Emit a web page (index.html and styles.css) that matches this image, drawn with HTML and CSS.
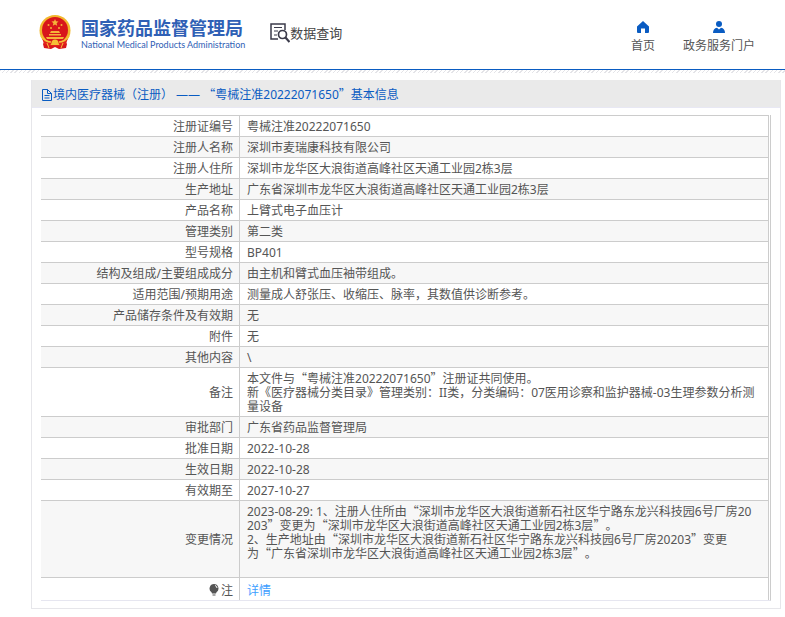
FILE: index.html
```
<!DOCTYPE html>
<html lang="zh-CN">
<head>
<meta charset="utf-8">
<title>数据查询</title>
<link rel="stylesheet" href="styles.css">
</head>
<body>
<header class="top">
  <a class="brand" href="#">
    <svg class="emblem" viewBox="0 0 32 34" aria-hidden="true">
      <path d="M7 24 L25 24 L28 29 L27 33 L20 34 L16 32 L12 34 L5 33 L4 29Z" fill="#d8161b"/>
      <circle cx="16" cy="15.500" r="15.500" fill="#f2b72c"/>
      <circle cx="16" cy="15" r="13" fill="#d8161b"/>
      <path d="M16 4l1 2.300 2.500.2-1.900 1.700.6 2.500-2.200-1.300-2.200 1.300.6-2.500-1.900-1.700 2.500-.2z" fill="#f5b43a"/>
      <g fill="#f5b43a"><circle cx="9.500" cy="10" r="1"/><circle cx="12" cy="13" r="1"/><circle cx="20" cy="13" r="1"/><circle cx="22.500" cy="10" r="1"/>
      <path d="M12 16h8l1 2H11zM10 19h12v1.500H10zM7 22h18l-1 2H8z"/></g>
      <path d="M3 23q13 8 26 0l-2 6q-11 5-22 0z" fill="#e3231c"/>
      <path d="M2 21q4 6 10 6M30 21q-4 6-10 6" stroke="#f5c037" stroke-width="1.500" fill="none"/>
      <path d="M12.500 28a3.500 3.500 0 0 1 7 0l1 2h-9z" fill="#f5c037"/>
      <path d="M8 28l2 5M24 28l-2 5" stroke="#f5c037" fill="none"/>
    </svg>
    <span class="names">
      <strong class="name-zh">国家药品监督管理局</strong>
      <span class="name-en">National Medical Products Administration</span>
    </span>
  </a>
  <a class="section" href="#">
    <svg class="search" viewBox="0 0 20 20" fill="none" stroke="#3b3b4b" aria-hidden="true">
      <path d="M15 7V1H1v15h7" stroke-width="1.500"/>
      <path d="M4 4.500h8M4 8h4M4 12h3"/>
      <circle cx="12.500" cy="11.500" r="4" stroke-width="1.700"/>
      <path d="M15.500 14.500l4 4.500" stroke-width="2.200"/>
    </svg>
    <span>数据查询</span>
  </a>
  <nav class="nav">
    <a href="#">
      <svg viewBox="0 0 12 12" aria-hidden="true"><path d="M6 0L0 5.500V11q0 1 1 1h3V7.500h4V12h3q1 0 1-1V5.500z" fill="#0a5cc2"/></svg>
      <span>首页</span>
    </a>
    <a href="#">
      <svg viewBox="0 0 12 12" aria-hidden="true"><circle cx="6" cy="3" r="3" fill="#0a5cc2"/><path d="M0 12q0-4.500 4-5.200l2 1.700 2-1.700q4 .7 4 5.200z" fill="#0a5cc2"/></svg>
      <span>政务服务门户</span>
    </a>
  </nav>
</header>
<main class="panel">
  <h1 class="title">
    <svg class="doc" viewBox="0 0 12 12" fill="none" stroke="#0a5cc2" aria-hidden="true"><path d="M1.500.5h5l4 4v7h-9zM6.500.5v4h4M3.500 6.500h5M3.500 9h5"/></svg>
    <span>境内医疗器械（注册） —— <span class="cjk">“</span>粤械注准20222071650<span class="cjk">”</span>基本信息</span>
  </h1>
  <div class="frame">
  <table class="info">
    <tbody>
      <tr><th scope="row">注册证编号</th><td>粤械注准20222071650</td></tr>
      <tr><th scope="row">注册人名称</th><td>深圳市麦瑞康科技有限公司</td></tr>
      <tr><th scope="row">注册人住所</th><td>深圳市龙华区大浪街道高峰社区天通工业园2栋3层</td></tr>
      <tr><th scope="row">生产地址</th><td>广东省深圳市龙华区大浪街道高峰社区天通工业园2栋3层</td></tr>
      <tr><th scope="row">产品名称</th><td>上臂式电子血压计</td></tr>
      <tr><th scope="row">管理类别</th><td>第二类</td></tr>
      <tr><th scope="row">型号规格</th><td>BP401</td></tr>
      <tr><th scope="row">结构及组成/主要组成成分</th><td>由主机和臂式血压袖带组成。</td></tr>
      <tr><th scope="row">适用范围/预期用途</th><td>测量成人舒张压、收缩压、脉率，其数值供诊断参考。</td></tr>
      <tr><th scope="row">产品储存条件及有效期</th><td>无</td></tr>
      <tr><th scope="row">附件</th><td>无</td></tr>
      <tr><th scope="row">其他内容</th><td>\</td></tr>
      <tr><th scope="row">备注</th><td>本文件与<span class="cjk">“</span>粤械注准20222071650<span class="cjk">”</span>注册证共同使用。<br>新《医疗器械分类目录》管理类别：II类，分类编码：07医用诊察和监护器械-03生理参数分析测量设备</td></tr>
      <tr><th scope="row">审批部门</th><td>广东省药品监督管理局</td></tr>
      <tr><th scope="row">批准日期</th><td>2022-10-28</td></tr>
      <tr><th scope="row">生效日期</th><td>2022-10-28</td></tr>
      <tr><th scope="row">有效期至</th><td>2027-10-27</td></tr>
      <tr><th scope="row">变更情况</th><td>2023-08-29: 1、注册人住所由<span class="cjk">“</span>深圳市龙华区大浪街道新石社区华宁路东龙兴科技园6号厂房20203<span class="cjk">”</span>变更为<span class="cjk">“</span>深圳市龙华区大浪街道高峰社区天通工业园2栋3层<span class="cjk">”</span>。<br>2、生产地址由<span class="cjk">“</span>深圳市龙华区大浪街道新石社区华宁路东龙兴科技园6号厂房20203<span class="cjk">”</span>变更<br>为<span class="cjk">“</span>广东省深圳市龙华区大浪街道高峰社区天通工业园2栋3层<span class="cjk">”</span>。<br><br></td></tr>
      <tr class="note"><th scope="row"><svg class="bulb" viewBox="0 0 10 12" aria-hidden="true"><path d="M5 0a4.500 4.500 0 0 1 2.500 8.200L7 9.500H3l-.5-1.300A4.500 4.500 0 0 1 5 0z" fill="#555"/><path d="M3.500 10.500h3v1h-3z" fill="#555"/><path d="M6 1.500q2 .5 2 2.500" stroke="#fff" fill="none"/></svg>注</th><td><a href="#">详情</a></td></tr>
    </tbody>
  </table>
  </div>
</main>
</body>
</html>
```
FILE: styles.css
```
* { box-sizing: border-box; }
body {
  margin: 0;
  background: #fff;
  color: #555;
  font: 12px/14px "Noto Sans", "Noto Sans CJK SC", sans-serif;
  text-spacing-trim: space-all;
}
a { color: inherit; text-decoration: none; }
.cjk { font-family: "Noto Sans CJK SC", sans-serif; line-height: 0; }

.top {
  display: flex;
  align-items: flex-start;
  height: 73px;
  padding: 15px 30px 0 39px;
  background:
    linear-gradient(#0a5cc2, #0a5cc2) 0 69px / 100% 1px no-repeat,
    repeating-linear-gradient(135deg, #e4e4e8 0 1px, #fff 1px 3px) 0 70px / 100% 3px no-repeat;
}
.brand { display: flex; gap: 10px; color: #2f60b5; }
.emblem { width: 32px; height: 34px; }
.names { display: flex; flex-direction: column; padding-top: 1px; }
.name-zh { font: bold 18px/23px "Noto Sans CJK SC", sans-serif; }
.name-en { font: 9px/12px Lato, sans-serif; white-space: nowrap; }
.section {
  display: flex;
  align-items: center;
  margin: 8px 0 0 25px;
  color: #444;
  font-size: 13px;
  line-height: 20px;
}
.search { width: 20px; height: 20px; }
.nav { display: flex; gap: 28px; margin: 6px 0 0 auto; }
.nav a { display: flex; flex-direction: column; align-items: center; gap: 6px; }
.nav svg { width: 12px; height: 12px; }

.panel { margin: 7px 4px 8px 31px; border: 1px solid #e6e6ea; border-top: 0; }
.title {
  display: flex;
  align-items: center;
  height: 28px;
  margin: 0 0 7px;
  padding: 2px 0 0 9px;
  background: #eaeaea;
  border-bottom: 1px solid #e8e8f4;
  color: #0a5cc2;
  font-size: 12px;
  font-weight: normal;
}
.doc { width: 12px; height: 12px; }
.frame { margin: 0 9px 7px; border-right: 1px solid #ccc; border-bottom: 1px solid #e6e6f0; padding-right: 1px; }
.info { width: 100%; border-collapse: separate; border-spacing: 0; border-right: 1px solid #ccc; }
.info th, .info td {
  padding: 4px 11px 2px 7px;
  border-top: 1px solid #ccc;
  font-weight: normal;
  vertical-align: middle;
  word-break: break-all;
}
.info th { width: 199px; padding: 4px 6px 2px; border-right: 1px solid #ccc; text-align: right; }
.info tr:nth-child(even) { background: #f7f7f7; }
.info .note th, .info .note td { padding-top: 6px; }
.note a { color: #409eff; }
.bulb { width: 10px; height: 12px; margin-right: 2px; vertical-align: -1px; }
```
